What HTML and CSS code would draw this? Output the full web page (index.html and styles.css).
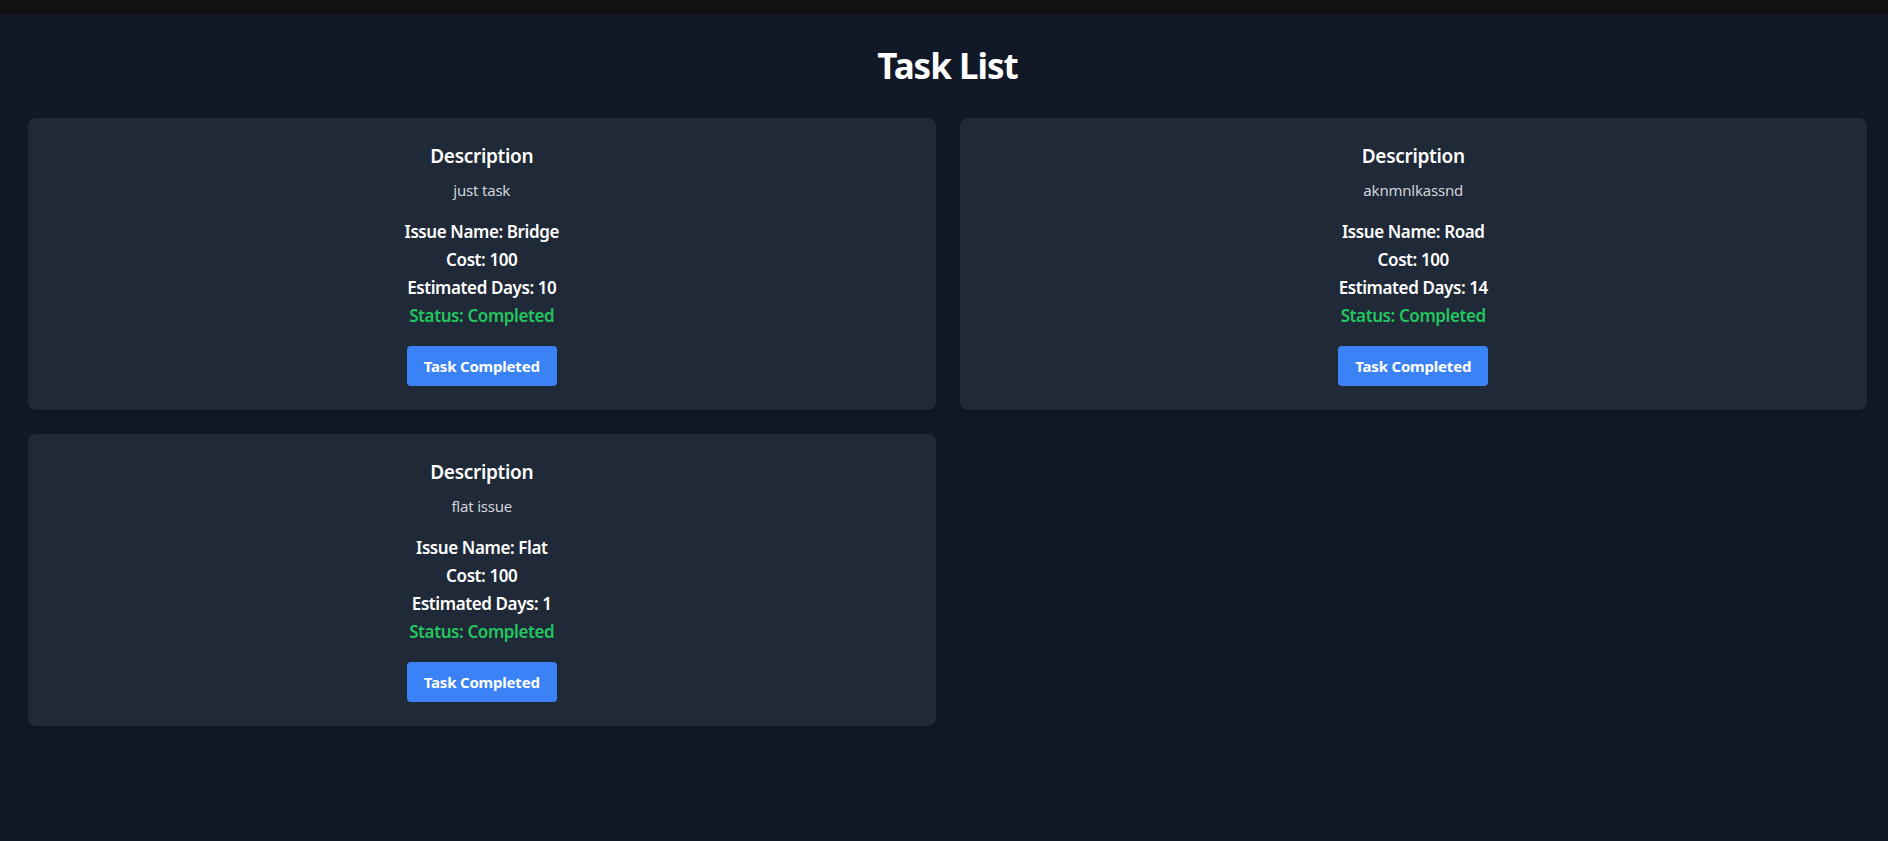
FILE: index.html
```html
<!DOCTYPE html>
<html lang="en">
<head>
<meta charset="utf-8">
<title>Task List</title>
<link rel="stylesheet" href="styles.css">
</head>
<body>
<div class="topbar"></div>
<main class="page">
  <h1 class="title">Task List</h1>
  <div class="grid">
    <div class="card">
      <h2 class="card-heading">Description</h2>
      <p class="card-desc">just task</p>
      <div class="card-info">
        <p>Issue Name: Bridge</p>
        <p>Cost: 100</p>
        <p>Estimated Days: 10</p>
        <p class="status">Status: Completed</p>
      </div>
      <button class="btn">Task Completed</button>
    </div>
    <div class="card">
      <h2 class="card-heading">Description</h2>
      <p class="card-desc">aknmnlkassnd</p>
      <div class="card-info">
        <p>Issue Name: Road</p>
        <p>Cost: 100</p>
        <p>Estimated Days: 14</p>
        <p class="status">Status: Completed</p>
      </div>
      <button class="btn">Task Completed</button>
    </div>
    <div class="card">
      <h2 class="card-heading">Description</h2>
      <p class="card-desc">flat issue</p>
      <div class="card-info">
        <p>Issue Name: Flat</p>
        <p>Cost: 100</p>
        <p>Estimated Days: 1</p>
        <p class="status">Status: Completed</p>
      </div>
      <button class="btn">Task Completed</button>
    </div>
  </div>
</main>
</body>
</html>
```
FILE: styles.css
```css
* { box-sizing: border-box; }
html, body {
  margin: 0;
  padding: 0;
  background: #111827;
  min-height: 100%;
}
body {
  font-family: "Noto Sans", "Open Sans", sans-serif;
  color: #ffffff;
  min-height: 841px;
}
.topbar {
  height: 14px;
  background: #121212;
}
.page {
  padding: 32px 21px 32px 28px;
}
.title {
  margin: 0 0 32px;
  text-align: center;
  font-size: 35px;
  line-height: 40px;
  font-weight: 700;
  letter-spacing: -1px;
}
.grid {
  display: grid;
  grid-template-columns: 1fr 1fr;
  gap: 24px 24px;
}
.card {
  background: #1f2937;
  border-radius: 8px;
  padding: 24px;
  text-align: center;
  box-shadow: 0 4px 6px -1px rgba(0,0,0,0.1), 0 2px 4px -2px rgba(0,0,0,0.1);
}
.card-heading {
  margin: 0 0 8px;
  font-size: 19px;
  line-height: 28px;
  font-weight: 600;
  letter-spacing: -0.3px;
}
.card-desc {
  margin: 0;
  font-size: 15px;
  line-height: 24px;
  color: #d1d5db;
  letter-spacing: -0.2px;
}
.card-info {
  margin-top: 16px;
}
.card-info p {
  margin: 0;
  font-size: 17px;
  line-height: 28px;
  font-weight: 600;
  letter-spacing: -0.4px;
}
.card-info .status {
  color: #22c55e;
  font-weight: 600;
}
.btn {
  margin-top: 16px;
  background: #3b82f6;
  color: #ffffff;
  border: none;
  border-radius: 4px;
  padding: 8px 16px;
  width: 150px;
  font-family: inherit;
  font-size: 15px;
  line-height: 24px;
  font-weight: 700;
  letter-spacing: -0.2px;
  cursor: pointer;
}
```
